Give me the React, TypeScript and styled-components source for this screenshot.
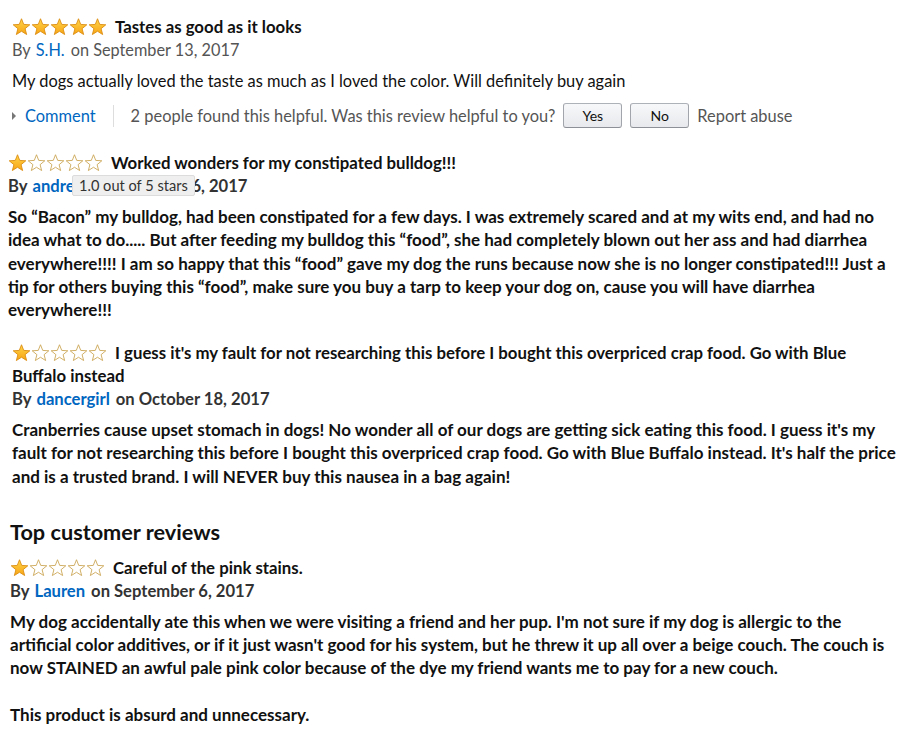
import styled, { createGlobalStyle } from 'styled-components';

const GlobalStyle = createGlobalStyle`
  body {
    margin: 0;
    background: #fff;
    font-family: Lato, 'Liberation Sans', sans-serif;
    color: #111;
  }
`;

const Page = styled.main`
  width: 897px;
  padding-top: 15px;
`;

const Review = styled.section<{ $indent: number; $gap: number }>`
  padding-left: ${(p) => p.$indent}px;
  margin-top: ${(p) => p.$gap}px;
`;

const Title = styled.h3`
  margin: 0;
  font-size: 16.8px;
  line-height: 23px;
  font-weight: 700;
  color: #111;
`;

const StarRow = styled.span`
  display: inline-flex;
  vertical-align: -3px;
  margin-right: 8px;
`;

const ByLine = styled.div<{ $bold: boolean }>`
  position: relative;
  margin-top: 1px;
  line-height: 22px;
  font-size: ${(p) => (p.$bold ? 16.6 : 16.3)}px;
  color: ${(p) => (p.$bold ? '#333' : '#555')};
  font-weight: ${(p) => (p.$bold ? 700 : 400)};
`;

const Author = styled.a`
  color: #0066c0;
  text-decoration: none;
  margin: 0 6px 0 5px;
`;

const Body = styled.p<{ $bold: boolean; $top: number }>`
  margin: ${(p) => p.$top}px 0 0;
  font-size: ${(p) => (p.$bold ? 17 : 16.4)}px;
  line-height: ${(p) => (p.$bold ? 23.3 : 22)}px;
  font-weight: ${(p) => (p.$bold ? 700 : 400)};
  color: #111;
`;

const ActionRow = styled.div`
  display: flex;
  align-items: center;
  height: 25px;
  margin-top: 11px;
  font-size: 16.4px;
  color: #555;
`;

const CommentLink = styled.a`
  display: flex;
  align-items: center;
  color: #0066c0;
  text-decoration: none;
  padding-right: 17px;
  border-right: 1px solid #ddd;
  height: 22px;
  margin-right: 17px;

  &::before {
    content: '';
    border-left: 4px solid #777;
    border-top: 4px solid transparent;
    border-bottom: 4px solid transparent;
    margin-right: 9px;
  }
`;

const VoteButton = styled.button`
  width: 59px;
  height: 25px;
  margin-left: 8px;
  border: 1px solid #adb1b8;
  border-color: #adb1b8 #a2a6ac #8d9096;
  border-radius: 3px;
  background: linear-gradient(to bottom, #f7f8fa, #e7e9ec);
  font-family: inherit;
  font-size: 14px;
  color: #111;
  padding: 0;
`;

const Report = styled.span`
  margin-left: 8px;
  color: #555;
`;

const Tooltip = styled.div`
  position: absolute;
  left: 64px;
  top: 0;
  height: 19px;
  padding: 0 6px;
  background: #efefef;
  border: 1px solid #dcdcdc;
  border-radius: 2px;
  font-size: 14.6px;
  font-weight: 400;
  line-height: 19px;
  color: #333;
`;

const Heading = styled.h2`
  margin: 30px 0 0;
  padding-left: 10px;
  font-size: 21.7px;
  line-height: 28px;
  font-weight: 700;
  color: #111;
`;

const STAR =
  'M10 0.8 L12.35 6.76 L18.75 7.16 L13.8 11.24 L15.41 17.44 L10 14 L4.59 17.44 L6.2 11.24 L1.25 7.16 L7.65 6.76 Z';

const Stars = ({ rating }: { rating: number }) => (
  <StarRow>
    {[0, 1, 2, 3, 4].map((i) => (
      <svg key={i} width="19" height="18" viewBox="0 0 20 19">
        <defs>
          <linearGradient id="gold" x1="0" y1="0" x2="0" y2="1">
            <stop offset="0" stopColor="#ffd54a" />
            <stop offset="1" stopColor="#f7a414" />
          </linearGradient>
        </defs>
        <path
          d={STAR}
          fill={i < rating ? 'url(#gold)' : '#fff'}
          stroke={i < rating ? '#d98a0c' : '#c9a24e'}
          strokeWidth="0.9"
          strokeLinejoin="round"
        />
      </svg>
    ))}
  </StarRow>
);

type ReviewData = {
  rating: number;
  title: string;
  author: string;
  date: string;
  paragraphs: string[];
};

const Meta = ({
  author,
  date,
  bold,
  tooltip,
}: {
  author: string;
  date: string;
  bold: boolean;
  tooltip?: string;
}) => (
  <ByLine $bold={bold}>
    By<Author href="#">{author}</Author>on {date}
    {tooltip && <Tooltip>{tooltip}</Tooltip>}
  </ByLine>
);

const BoldReview = ({
  data,
  indent,
  gap,
  tooltip,
}: {
  data: ReviewData;
  indent: number;
  gap: number;
  tooltip?: string;
}) => (
  <Review $indent={indent} $gap={gap}>
    <Title>
      <Stars rating={data.rating} />
      {data.title}
    </Title>
    <Meta author={data.author} date={data.date} bold tooltip={tooltip} />
    {data.paragraphs.map((p, i) => (
      <Body key={i} $bold $top={i === 0 ? 8 : 23.3}>
        {p}
      </Body>
    ))}
  </Review>
);

const reviews: ReviewData[] = [
  {
    rating: 1,
    title: 'Worked wonders for my constipated bulldog!!!',
    author: 'andrew',
    date: 'October 16, 2017',
    paragraphs: [
      'So “Bacon” my bulldog, had been constipated for a few days. I was extremely scared and at my wits end, and had no idea what to do..... But after feeding my bulldog this “food”, she had completely blown out her ass and had diarrhea everywhere!!!! I am so happy that this “food” gave my dog the runs because now she is no longer constipated!!! Just a tip for others buying this “food”, make sure you buy a tarp to keep your dog on, cause you will have diarrhea everywhere!!!',
    ],
  },
  {
    rating: 1,
    title:
      "I guess it's my fault for not researching this before I bought this overpriced crap food. Go with Blue Buffalo instead",
    author: 'dancergirl',
    date: 'October 18, 2017',
    paragraphs: [
      "Cranberries cause upset stomach in dogs! No wonder all of our dogs are getting sick eating this food. I guess it's my fault for not researching this before I bought this overpriced crap food. Go with Blue Buffalo instead. It's half the price and is a trusted brand. I will NEVER buy this nausea in a bag again!",
    ],
  },
  {
    rating: 1,
    title: 'Careful of the pink stains.',
    author: 'Lauren',
    date: 'September 6, 2017',
    paragraphs: [
      "My dog accidentally ate this when we were visiting a friend and her pup. I'm not sure if my dog is allergic to the artificial color additives, or if it just wasn't good for his system, but he threw it up all over a beige couch. The couch is now STAINED an awful pale pink color because of the dye my friend wants me to pay for a new couch.",
      'This product is absurd and unnecessary.',
    ],
  },
];

export default function App() {
  return (
    <>
      <GlobalStyle />
      <Page>
        <Review $indent={12} $gap={0}>
          <Title>
            <Stars rating={5} />
            Tastes as good as it looks
          </Title>
          <Meta author="S.H." date="September 13, 2017" bold={false} />
          <Body $bold={false} $top={9}>
            My dogs actually loved the taste as much as I loved the color. Will definitely buy again
          </Body>
          <ActionRow>
            <CommentLink href="#">Comment</CommentLink>
            2 people found this helpful. Was this review helpful to you?
            <VoteButton>Yes</VoteButton>
            <VoteButton>No</VoteButton>
            <Report>Report abuse</Report>
          </ActionRow>
        </Review>
        <BoldReview data={reviews[0]} indent={8} gap={23} tooltip="1.0 out of 5 stars" />
        <BoldReview data={reviews[1]} indent={12} gap={19.5} />
        <Heading>Top customer reviews</Heading>
        <BoldReview data={reviews[2]} indent={10} gap={10} />
      </Page>
    </>
  );
}
